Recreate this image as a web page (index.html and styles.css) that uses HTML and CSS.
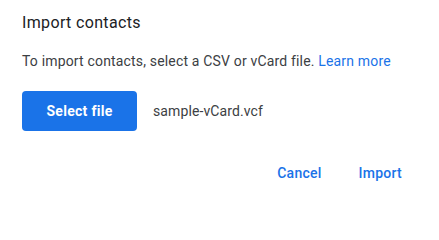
FILE: index.html
```html
<!DOCTYPE html>
<html>
<head>
<meta charset="utf-8">
<link rel="stylesheet" href="styles.css">
</head>
<body>
<div class="dialog">
  <h1 class="title">Import contacts</h1>
  <p class="desc">To import contacts, select a CSV or vCard file. <a class="link" href="#">Learn more</a></p>
  <div class="file-row">
    <button class="btn-primary">Select file</button>
    <span class="filename">sample-vCard.vcf</span>
  </div>
  <div class="actions">
    <button class="btn-text">Cancel</button>
    <button class="btn-text">Import</button>
  </div>
</div>
</body>
</html>
```

FILE: styles.css
```css
html, body {
  margin: 0;
  padding: 0;
  background: #ffffff;
}
.dialog {
  width: 439px;
  height: 203px;
  box-sizing: border-box;
  padding: 11px 22px 0 22px;
  font-family: Roboto, "Liberation Sans", sans-serif;
  color: #3c4043;
}
.title {
  margin: 0;
  font-size: 16px;
  line-height: 24px;
  font-weight: 400;
  color: #202124;
  letter-spacing: 0.35px;
}
.desc {
  margin: 16px 0 0 0;
  font-size: 14px;
  line-height: 20px;
  color: #3c4043;
  letter-spacing: 0.17px;
}
.link {
  color: #1a73e8;
  text-decoration: none;
}
.file-row {
  display: flex;
  align-items: center;
  gap: 16px;
  margin-top: 20px;
}
.btn-primary {
  height: 40px;
  width: 115px;
  border: none;
  border-radius: 4px;
  background: #1a73e8;
  color: #ffffff;
  font-family: Roboto, "Liberation Sans", sans-serif;
  font-size: 14px;
  font-weight: 700;
  letter-spacing: 0.3px;
  padding: 0;
}
.filename {
  font-size: 14px;
  line-height: 20px;
  color: #3c4043;
  letter-spacing: 0.1px;
}
.actions {
  display: flex;
  justify-content: flex-end;
  gap: 37px;
  margin-top: 32px;
  padding-right: 15px;
}
.btn-text {
  border: none;
  background: transparent;
  padding: 0;
  font-family: Roboto, "Liberation Sans", sans-serif;
  font-size: 14px;
  line-height: 20px;
  font-weight: 500;
  color: #1a73e8;
  letter-spacing: 0.25px;
}
```
